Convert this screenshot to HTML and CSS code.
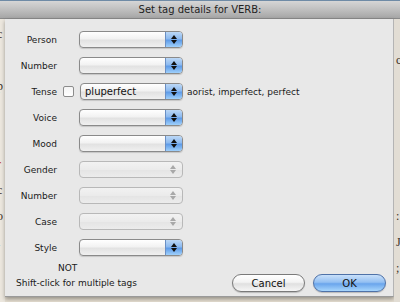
FILE: index.html
```html
<!DOCTYPE html>
<html lang="en">
<head>
    <meta charset="UTF-8">
    <meta name="viewport" content="width=device-width, initial-scale=1.0">
    <title>Set tag details for VERB:</title>
    <link rel="stylesheet" href="styles.css">
</head>
<body>
    <div class="titlebar">Set tag details for VERB:</div>

    <div class="stage">
        <div class="behind behind-left">
            <span>c</span><span>&nbsp;</span><span>p</span><span>&nbsp;</span><span>&nbsp;</span><span class="red">r</span><span>c</span><span>o</span><span>l</span><span>,</span>
        </div>

        <div class="dialog">
            <div class="fields">
                <div class="label">Person</div>
                <div></div>
                <div class="popup"><span class="arrows"></span></div>
                <div></div>

                <div class="label">Number</div>
                <div></div>
                <div class="popup"><span class="arrows"></span></div>
                <div></div>

                <div class="label">Tense</div>
                <div class="checkbox"></div>
                <div class="popup tense"><span class="value">pluperfect</span><span class="arrows"></span></div>
                <div class="hint">aorist, imperfect, perfect</div>

                <div class="label">Voice</div>
                <div></div>
                <div class="popup"><span class="arrows"></span></div>
                <div></div>

                <div class="label">Mood</div>
                <div></div>
                <div class="popup"><span class="arrows"></span></div>
                <div></div>

                <div class="label">Gender</div>
                <div></div>
                <div class="popup disabled"><span class="arrows"></span></div>
                <div></div>

                <div class="label">Number</div>
                <div></div>
                <div class="popup disabled"><span class="arrows"></span></div>
                <div></div>

                <div class="label">Case</div>
                <div></div>
                <div class="popup disabled"><span class="arrows"></span></div>
                <div></div>

                <div class="label">Style</div>
                <div></div>
                <div class="popup"><span class="arrows"></span></div>
                <div></div>
            </div>

            <div class="footer">
                <div class="notes">
                    <div class="not">NOT</div>
                    <div>Shift-click for multiple tags</div>
                </div>
                <div class="buttons">
                    <button class="btn">Cancel</button>
                    <button class="btn btn-default">OK</button>
                </div>
            </div>
        </div>

        <div class="behind behind-right">
            <span>&nbsp;</span><span>c</span><span>&nbsp;</span><span>&nbsp;</span><span>&nbsp;</span><span>&nbsp;</span><span>&nbsp;</span><span>:</span><span>J</span><span>;</span>
        </div>
    </div>
</body>
</html>
```

FILE: styles.css
```css
* {
    margin: 0;
    padding: 0;
    box-sizing: border-box;
}

body {
    width: 400px;
    height: 302px;
    overflow: hidden;
    font-family: 'DejaVu Sans', Verdana, sans-serif;
    font-size: 9px;
    color: #1a1a1a;
    background: #e4ddd0;
}

.titlebar {
    height: 19px;
    line-height: 18px;
    text-align: center;
    font-size: 10px;
    color: #222;
    border-top: 1px solid #6f8ba6;
    background: linear-gradient(#d6d6d6 0%, #bdbdbd 55%, #a6a6a6 100%);
    border-bottom: 1px solid #8a8a8a;
}

.stage {
    display: flex;
    height: 283px;
}

/* page peeking out behind the sheet */
.behind {
    display: flex;
    flex-direction: column;
    overflow: hidden;
    font-family: 'Liberation Serif', serif;
    font-size: 12px;
    line-height: 26px;
    color: #3a3025;
    background: #ece7de;
}

.behind .red {
    color: #b8261c;
}

.behind-left {
    width: 5px;
    padding-top: 2px;
}

.behind-left span {
    margin-left: -3px;
}

.behind-right {
    width: 6px;
    padding-top: 2px;
    background: #e2ddd4;
}

.behind-right span {
    margin-left: 2px;
}

.dialog {
    width: 389px;
    height: 278px;
    background: #e8e8e8;
    border-right: 1px solid #b4b4b4;
    border-bottom: 1px solid #9a9a9a;
    box-shadow: 0 2px 4px rgba(0,0,0,0.35);
    display: flex;
    flex-direction: column;
}

.fields {
    display: grid;
    grid-template-columns: 52px 22px 104px auto;
    grid-auto-rows: 17px;
    row-gap: 9px;
    align-items: center;
    padding-top: 12px;
}

.label {
    text-align: right;
}

.checkbox {
    width: 11px;
    height: 11px;
    margin-left: 6px;
    background: linear-gradient(#f4f4f4, #ffffff);
    border: 1px solid #8c8c8c;
    border-radius: 2px;
}

.popup {
    height: 17px;
    display: flex;
    align-items: center;
    justify-content: space-between;
    border: 1px solid #8a8a8a;
    border-radius: 4px;
    background: linear-gradient(#ffffff 0%, #f2f2f2 45%, #e2e2e2 55%, #f0f0f0 100%);
    overflow: hidden;
    box-shadow: 0 1px 1px rgba(0,0,0,0.15);
}

.popup.tense {
    margin-left: 1px;
}

.popup .value {
    font-size: 10px;
    padding-left: 4px;
    color: #111;
}

.arrows {
    width: 17px;
    height: 100%;
    margin-left: auto;
    position: relative;
    border-left: 1px solid #6a8fc4;
    background: linear-gradient(#bcd8f6 0%, #8dbaf0 45%, #5e9be8 55%, #9fd0fb 100%);
}

.arrows::before,
.arrows::after {
    content: '';
    position: absolute;
    left: 5px;
    border-left: 3px solid transparent;
    border-right: 3px solid transparent;
}

.arrows::before {
    top: 3px;
    border-bottom: 4px solid #111;
}

.arrows::after {
    bottom: 3px;
    border-top: 4px solid #111;
}

.popup.disabled {
    border-color: #b8b8b8;
    box-shadow: none;
    background: linear-gradient(#f2f2f2 0%, #ebebeb 50%, #e4e4e4 51%, #ececec 100%);
}

.popup.disabled .arrows {
    border-left: none;
    background: none;
}

.popup.disabled .arrows::before {
    border-bottom-color: #a8a8a8;
}

.popup.disabled .arrows::after {
    border-top-color: #a8a8a8;
}

.hint {
    margin-left: 4px;
    white-space: nowrap;
}

.footer {
    flex: 1;
    display: flex;
    justify-content: space-between;
    align-items: flex-end;
    padding: 0 7px 4px 11px;
}

.notes {
    display: flex;
    flex-direction: column;
    gap: 4px;
    line-height: 11px;
    margin-bottom: 3px;
}

.not {
    padding-left: 42px;
}

.buttons {
    display: flex;
    gap: 8px;
}

.btn {
    width: 73px;
    height: 18px;
    font-family: 'DejaVu Sans', Verdana, sans-serif;
    font-size: 10px;
    color: #111;
    border: 1px solid #7a7a7a;
    border-radius: 9px;
    background: linear-gradient(#ffffff 0%, #f3f3f3 45%, #e0e0e0 55%, #f6f6f6 100%);
    box-shadow: 0 1px 1px rgba(0,0,0,0.2);
}

.btn-default {
    border-color: #4f72a8;
    background: linear-gradient(#c9e0fa 0%, #94c0f2 45%, #6aa5ec 55%, #a8d6fc 100%);
}
```
